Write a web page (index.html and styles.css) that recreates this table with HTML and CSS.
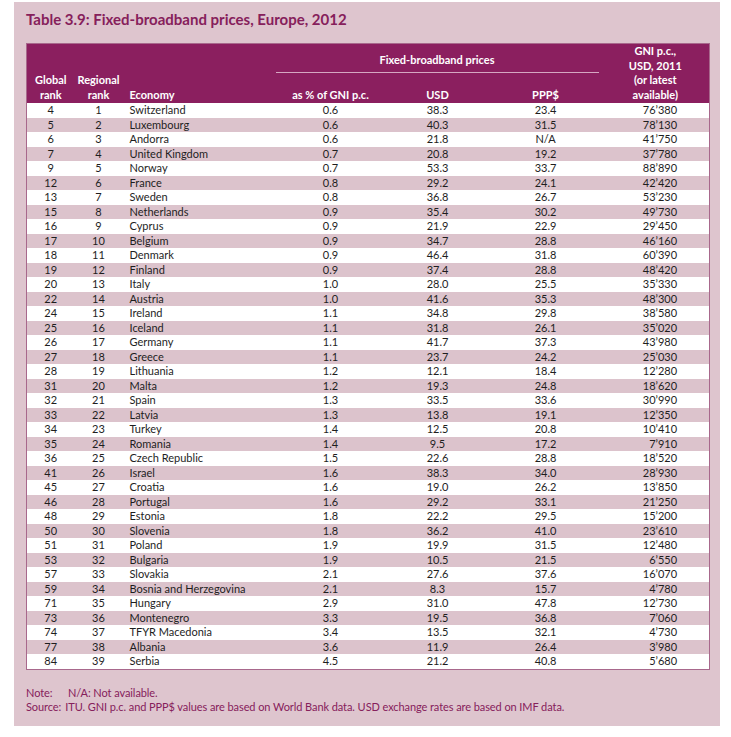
FILE: index.html
```html
<!DOCTYPE html>
<html>
<head>
<meta charset="utf-8">
<link rel="stylesheet" href="styles.css">
</head>
<body>
<div class="panel">
  <h1 class="title">Table 3.9: Fixed-broadband prices, Europe, 2012</h1>
  <table class="data">
    <colgroup>
      <col class="c1"><col class="c2"><col class="c3"><col class="c4"><col class="c5"><col class="c6"><col class="c7">
    </colgroup>
    <thead>
      <tr class="h1">
        <th></th><th></th><th></th>
        <th colspan="3" class="group"><span>Fixed-broadband prices</span></th>
        <th rowspan="2" class="gni">GNI p.c.,<br>USD, 2011<br>(or latest<br>available)</th>
      </tr>
      <tr class="h2">
        <th>Global<br>rank</th>
        <th>Regional<br>rank</th>
        <th class="left">Economy</th>
        <th>as % of GNI p.c.</th>
        <th>USD</th>
        <th>PPP$</th>
      </tr>
    </thead>
    <tbody id="rows">
<tr><td>4</td><td>1</td><td class="eco">Switzerland</td><td>0.6</td><td>38.3</td><td>23.4</td><td class="r">76’380</td></tr>
<tr><td>5</td><td>2</td><td class="eco">Luxembourg</td><td>0.6</td><td>40.3</td><td>31.5</td><td class="r">78’130</td></tr>
<tr><td>6</td><td>3</td><td class="eco">Andorra</td><td>0.6</td><td>21.8</td><td>N/A</td><td class="r">41’750</td></tr>
<tr><td>7</td><td>4</td><td class="eco">United Kingdom</td><td>0.7</td><td>20.8</td><td>19.2</td><td class="r">37’780</td></tr>
<tr><td>9</td><td>5</td><td class="eco">Norway</td><td>0.7</td><td>53.3</td><td>33.7</td><td class="r">88’890</td></tr>
<tr><td>12</td><td>6</td><td class="eco">France</td><td>0.8</td><td>29.2</td><td>24.1</td><td class="r">42’420</td></tr>
<tr><td>13</td><td>7</td><td class="eco">Sweden</td><td>0.8</td><td>36.8</td><td>26.7</td><td class="r">53’230</td></tr>
<tr><td>15</td><td>8</td><td class="eco">Netherlands</td><td>0.9</td><td>35.4</td><td>30.2</td><td class="r">49’730</td></tr>
<tr><td>16</td><td>9</td><td class="eco">Cyprus</td><td>0.9</td><td>21.9</td><td>22.9</td><td class="r">29’450</td></tr>
<tr><td>17</td><td>10</td><td class="eco">Belgium</td><td>0.9</td><td>34.7</td><td>28.8</td><td class="r">46’160</td></tr>
<tr><td>18</td><td>11</td><td class="eco">Denmark</td><td>0.9</td><td>46.4</td><td>31.8</td><td class="r">60’390</td></tr>
<tr><td>19</td><td>12</td><td class="eco">Finland</td><td>0.9</td><td>37.4</td><td>28.8</td><td class="r">48’420</td></tr>
<tr><td>20</td><td>13</td><td class="eco">Italy</td><td>1.0</td><td>28.0</td><td>25.5</td><td class="r">35’330</td></tr>
<tr><td>22</td><td>14</td><td class="eco">Austria</td><td>1.0</td><td>41.6</td><td>35.3</td><td class="r">48’300</td></tr>
<tr><td>24</td><td>15</td><td class="eco">Ireland</td><td>1.1</td><td>34.8</td><td>29.8</td><td class="r">38’580</td></tr>
<tr><td>25</td><td>16</td><td class="eco">Iceland</td><td>1.1</td><td>31.8</td><td>26.1</td><td class="r">35’020</td></tr>
<tr><td>26</td><td>17</td><td class="eco">Germany</td><td>1.1</td><td>41.7</td><td>37.3</td><td class="r">43’980</td></tr>
<tr><td>27</td><td>18</td><td class="eco">Greece</td><td>1.1</td><td>23.7</td><td>24.2</td><td class="r">25’030</td></tr>
<tr><td>28</td><td>19</td><td class="eco">Lithuania</td><td>1.2</td><td>12.1</td><td>18.4</td><td class="r">12’280</td></tr>
<tr><td>31</td><td>20</td><td class="eco">Malta</td><td>1.2</td><td>19.3</td><td>24.8</td><td class="r">18’620</td></tr>
<tr><td>32</td><td>21</td><td class="eco">Spain</td><td>1.3</td><td>33.5</td><td>33.6</td><td class="r">30’990</td></tr>
<tr><td>33</td><td>22</td><td class="eco">Latvia</td><td>1.3</td><td>13.8</td><td>19.1</td><td class="r">12’350</td></tr>
<tr><td>34</td><td>23</td><td class="eco">Turkey</td><td>1.4</td><td>12.5</td><td>20.8</td><td class="r">10’410</td></tr>
<tr><td>35</td><td>24</td><td class="eco">Romania</td><td>1.4</td><td>9.5</td><td>17.2</td><td class="r">7’910</td></tr>
<tr><td>36</td><td>25</td><td class="eco">Czech Republic</td><td>1.5</td><td>22.6</td><td>28.8</td><td class="r">18’520</td></tr>
<tr><td>41</td><td>26</td><td class="eco">Israel</td><td>1.6</td><td>38.3</td><td>34.0</td><td class="r">28’930</td></tr>
<tr><td>45</td><td>27</td><td class="eco">Croatia</td><td>1.6</td><td>19.0</td><td>26.2</td><td class="r">13’850</td></tr>
<tr><td>46</td><td>28</td><td class="eco">Portugal</td><td>1.6</td><td>29.2</td><td>33.1</td><td class="r">21’250</td></tr>
<tr><td>48</td><td>29</td><td class="eco">Estonia</td><td>1.8</td><td>22.2</td><td>29.5</td><td class="r">15’200</td></tr>
<tr><td>50</td><td>30</td><td class="eco">Slovenia</td><td>1.8</td><td>36.2</td><td>41.0</td><td class="r">23’610</td></tr>
<tr><td>51</td><td>31</td><td class="eco">Poland</td><td>1.9</td><td>19.9</td><td>31.5</td><td class="r">12’480</td></tr>
<tr><td>53</td><td>32</td><td class="eco">Bulgaria</td><td>1.9</td><td>10.5</td><td>21.5</td><td class="r">6’550</td></tr>
<tr><td>57</td><td>33</td><td class="eco">Slovakia</td><td>2.1</td><td>27.6</td><td>37.6</td><td class="r">16’070</td></tr>
<tr><td>59</td><td>34</td><td class="eco">Bosnia and Herzegovina</td><td>2.1</td><td>8.3</td><td>15.7</td><td class="r">4’780</td></tr>
<tr><td>71</td><td>35</td><td class="eco">Hungary</td><td>2.9</td><td>31.0</td><td>47.8</td><td class="r">12’730</td></tr>
<tr><td>73</td><td>36</td><td class="eco">Montenegro</td><td>3.3</td><td>19.5</td><td>36.8</td><td class="r">7’060</td></tr>
<tr><td>74</td><td>37</td><td class="eco">TFYR Macedonia</td><td>3.4</td><td>13.5</td><td>32.1</td><td class="r">4’730</td></tr>
<tr><td>77</td><td>38</td><td class="eco">Albania</td><td>3.6</td><td>11.9</td><td>26.4</td><td class="r">3’980</td></tr>
<tr><td>84</td><td>39</td><td class="eco">Serbia</td><td>4.5</td><td>21.2</td><td>40.8</td><td class="r">5’680</td></tr>
    </tbody>
  </table>
  <div class="notes">
    <div class="note"><span class="lab">Note:</span><span>N/A: Not available.</span></div>
    <div class="note"><span class="lab src">Source:</span><span>ITU. GNI p.c. and PPP$ values are based on World Bank data. USD exchange rates are based on IMF data.</span></div>
  </div>
</div>
</body>
</html>
```
FILE: styles.css
```css
html, body {
  margin: 0;
  padding: 0;
  background: #ffffff;
}
body {
  padding: 2px 11px 0 14px;
  font-family: Lato, "Open Sans", sans-serif;
}
.panel {
  width: 706px;
  height: 724px;
  background: #dec5ce;
  box-sizing: border-box;
  padding: 0 11px 0 12px;
}
.title {
  margin: 0;
  padding-top: 8px;
  height: 41px;
  box-sizing: border-box;
  font-size: 15px;
  font-weight: 700;
  color: #86205b;
  line-height: 18px;
}
.data {
  width: 683px;
  border-collapse: collapse;
  table-layout: fixed;
  font-size: 11px;
  color: #1e1e1e;
  border: 1px solid #a8688c;
}
.c1 { width: 48px; }
.c2 { width: 48px; }
.c3 { width: 153px; }
.c4 { width: 110px; }
.c5 { width: 104px; }
.c6 { width: 112px; }
.c7 { width: 108px; }
thead {
  background: #8b1f5f;
  color: #ffffff;
}
th {
  font-weight: 700;
  padding: 0;
  line-height: 14.5px;
  text-align: center;
  vertical-align: bottom;
}
.h1 th { height: 29px; }
.h1 .group {
  vertical-align: middle;
}
.h1 .group span {
  display: block;
  border-bottom: 1px solid #d6a7c2;
  height: 28px;
  line-height: 29px;
  box-sizing: border-box;
  margin-right: 3px;
}
.h2 th { height: 29px; padding-bottom: 1px; }
th.left { text-align: left; padding-left: 7px; }
.gni { padding-bottom: 1px; padding-left: 0; }
td {
  padding: 0;
  height: 14.5px;
  line-height: 14.5px;
  text-align: center;
  white-space: nowrap;
}
tbody tr:nth-child(even) { background: #dcc3cc; }
tbody tr:nth-child(odd) { background: #ffffff; }
td.eco { text-align: left; padding-left: 7px; }
td.r { text-align: right; padding-right: 32px; }
.notes {
  margin-top: 16px;
  font-size: 11px;
  line-height: 14px;
  color: #86205b;
  letter-spacing: -0.08px;
}
.note { display: flex; }
.lab { width: 42px; flex: none; }
.lab.src { width: auto; margin-right: 4px; }
```
